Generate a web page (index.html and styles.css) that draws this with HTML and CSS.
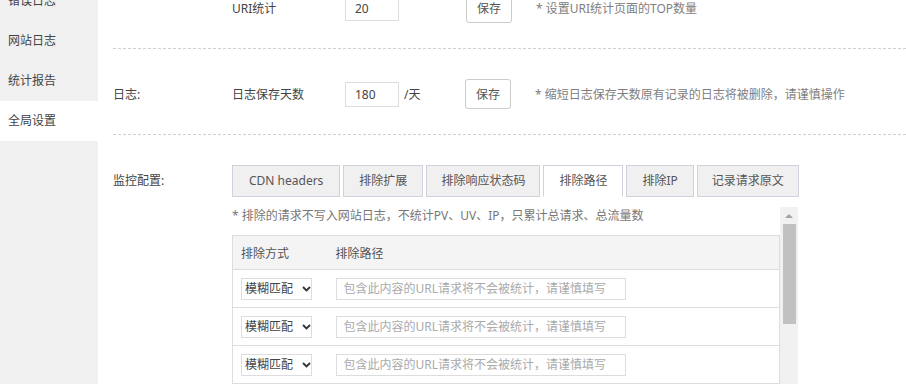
FILE: index.html
```html
<!DOCTYPE html>
<html lang="zh-CN">
<head>
<meta charset="utf-8">
<title>全局设置</title>
<link rel="stylesheet" href="styles.css">
</head>
<body>
<div class="page">
  <nav class="side">
    <div class="side-item">错误日志</div>
    <div class="side-item">网站日志</div>
    <div class="side-item">统计报告</div>
    <div class="side-item active">全局设置</div>
  </nav>
  <main class="main">
    <section class="row row-first">
      <div class="row-label"></div>
      <div class="row-body">
        <span class="field-label">URI统计</span>
        <div class="field-wrap"><input class="num" type="text" value="20"></div>
        <button class="btn" type="button">保存</button>
        <span class="hint">* 设置URI统计页面的TOP数量</span>
      </div>
    </section>
    <section class="row">
      <div class="row-label">日志:</div>
      <div class="row-body">
        <span class="field-label">日志保存天数</span>
        <div class="field-wrap"><input class="num" type="text" value="180"><span class="unit">/天</span></div>
        <button class="btn btn-2" type="button">保存</button>
        <span class="hint">* 缩短日志保存天数原有记录的日志将被删除，请谨慎操作</span>
      </div>
    </section>
    <section class="row row-last">
      <div class="row-label row-label-top">监控配置:</div>
      <div class="monitor">
        <div class="tabs">
          <span class="tab">CDN headers</span>
          <span class="tab">排除扩展</span>
          <span class="tab tab-narrow">排除响应状态码</span>
          <span class="tab active">排除路径</span>
          <span class="tab">排除IP</span>
          <span class="tab tab-narrow">记录请求原文</span>
        </div>
        <div class="scroll-box">
          <div class="scroll-content">
            <p class="tip">* 排除的请求不写入网站日志，不统计PV、UV、IP，只累计总请求、总流量数</p>
            <table class="rules">
              <thead>
                <tr><th class="col-mode">排除方式</th><th>排除路径</th></tr>
              </thead>
              <tbody>
                <tr>
                  <td><label class="sel"><select><option>模糊匹配</option></select><svg class="chev" width="9" height="6" viewBox="0 0 9 6"><path d="M1 1 L4.5 4.5 L8 1" fill="none" stroke="#333" stroke-width="1.8"/></svg></label></td>
                  <td><input class="path" type="text" placeholder="包含此内容的URL请求将不会被统计，请谨慎填写"></td>
                </tr>
                <tr>
                  <td><label class="sel"><select><option>模糊匹配</option></select><svg class="chev" width="9" height="6" viewBox="0 0 9 6"><path d="M1 1 L4.5 4.5 L8 1" fill="none" stroke="#333" stroke-width="1.8"/></svg></label></td>
                  <td><input class="path" type="text" placeholder="包含此内容的URL请求将不会被统计，请谨慎填写"></td>
                </tr>
                <tr>
                  <td><label class="sel"><select><option>模糊匹配</option></select><svg class="chev" width="9" height="6" viewBox="0 0 9 6"><path d="M1 1 L4.5 4.5 L8 1" fill="none" stroke="#333" stroke-width="1.8"/></svg></label></td>
                  <td><input class="path" type="text" placeholder="包含此内容的URL请求将不会被统计，请谨慎填写"></td>
                </tr>
                <tr>
                  <td><label class="sel"><select><option>模糊匹配</option></select><svg class="chev" width="9" height="6" viewBox="0 0 9 6"><path d="M1 1 L4.5 4.5 L8 1" fill="none" stroke="#333" stroke-width="1.8"/></svg></label></td>
                  <td><input class="path" type="text" placeholder="包含此内容的URL请求将不会被统计，请谨慎填写"></td>
                </tr>
              </tbody>
            </table>
          </div>
          <div class="vbar">
            <div class="vbar-btn"><span class="vbar-arrow"></span></div>
            <div class="vbar-thumb"></div>
          </div>
        </div>
      </div>
    </section>
  </main>
</div>
</body>
</html>
```

FILE: styles.css
```css
* { box-sizing: border-box; }
html, body { margin: 0; padding: 0; background: #fff; overflow: hidden; }
body {
  font-family: "Noto Sans", "Noto Sans CJK SC", sans-serif;
  font-size: 12px;
  color: #444;
}
.page {
  display: flex;
  margin-top: -19px;
  min-height: 430px;
}
.side {
  width: 98px;
  flex: none;
  background: #f0f0f0;
}
.side-item {
  height: 40px;
  line-height: 40px;
  padding-left: 8px;
  color: #444;
}
.side-item.active { background: #fff; }
.main {
  flex: 1;
  padding-left: 15px;
}
.row {
  display: flex;
  align-items: center;
  padding: 30px 0 25px;
  border-bottom: 1px dashed #d0d0d0;
}
.row-first { padding-top: 12px; }
.row-last { align-items: flex-start; border-bottom: 0; padding-bottom: 0; }
.row-label {
  width: 119px;
  flex: none;
  color: #444;
}
.row-label-top { line-height: 32px; }
.row-body {
  display: flex;
  align-items: center;
}
.field-label {
  width: 113px;
  flex: none;
}
.field-wrap {
  width: 120px;
  flex: none;
  display: flex;
  align-items: center;
}
.num {
  width: 54px;
  height: 25px;
  border: 1px solid #ddd;
  padding: 0 9px;
  font: inherit;
  color: #444;
  outline: none;
}
.unit { margin-left: 5px; color: #444; }
.btn {
  width: 46px;
  height: 30px;
  border: 1px solid #ccc;
  border-radius: 3px;
  background: #fff;
  font: inherit;
  color: #555;
  padding: 0;
  margin-left: 1px;
}
.btn-2 { margin-left: 0; }
.hint {
  margin-left: 24px;
  color: #808080;
}
.monitor { width: 566px; flex: none; }
.tabs {
  display: flex;
  gap: 3px;
}
.tab {
  height: 32px;
  line-height: 30px;
  padding: 0 15px;
  border: 1px solid #d2d0dc;
  background: #f0f0f0;
  color: #555;
  white-space: nowrap;
}
.tab:first-child { padding: 0 16px; }
.tab.tab-narrow { padding: 0 14px; }
.tab.active {
  background: #fff;
  border-bottom-color: #fff;
}
.scroll-box {
  margin-top: 10px;
  height: 200px;
  display: flex;
  overflow: hidden;
}
.scroll-content {
  width: 548px;
  flex: none;
}
.tip {
  margin: 0;
  line-height: 18px;
  color: #777;
}
.rules {
  margin-top: 10px;
  width: 548px;
  border-collapse: collapse;
  border: 1px solid #ddd;
}
.rules th {
  height: 34px;
  background: #f4f4f4;
  text-align: left;
  font-weight: normal;
  color: #555;
  padding: 0 8px;
  border-bottom: 1px solid #ddd;
}
.rules th.col-mode { width: 95px; }
.rules td {
  height: 38px;
  padding: 0 8px;
  border-bottom: 1px solid #ddd;
}
.sel {
  display: inline-flex;
  align-items: center;
  width: 71px;
  height: 22px;
  border: 1px solid #ddd;
  padding-left: 3px;
  vertical-align: middle;
}
.sel select {
  appearance: none;
  -webkit-appearance: none;
  border: 0;
  background: transparent;
  font: inherit;
  color: #444;
  padding: 0;
  margin: 0;
  width: 54px;
  outline: none;
}
.chev { flex: none; margin-left: 4px; }
.path {
  width: 290px;
  height: 22px;
  border: 1px solid #ddd;
  padding: 0 7px;
  font: inherit;
  color: #444;
  vertical-align: middle;
  outline: none;
}
.path::placeholder { color: #aaa; }
.vbar {
  width: 18px;
  flex: none;
  background: #f1f1f1;
  display: flex;
  flex-direction: column;
  align-items: center;
}
.vbar-btn {
  height: 17px;
  width: 100%;
  display: flex;
  align-items: center;
  justify-content: center;
}
.vbar-arrow {
  width: 0;
  height: 0;
  border-left: 4px solid transparent;
  border-right: 4px solid transparent;
  border-bottom: 4px solid #a3a3a3;
}
.vbar-thumb {
  width: 13px;
  height: 100px;
  background: #c1c1c1;
}
```
